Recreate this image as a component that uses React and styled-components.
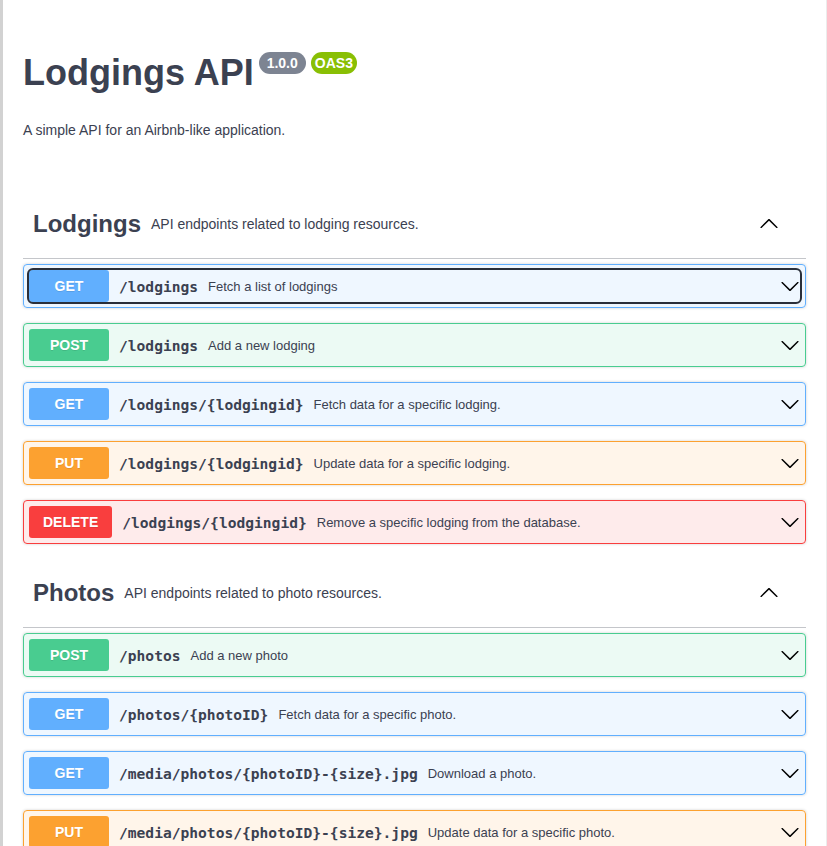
import React from 'react'
import styled, { createGlobalStyle } from 'styled-components'

const GlobalStyle = createGlobalStyle`
  body {
    margin: 0;
    background: #fff;
    font-family: 'Liberation Sans', Arial, sans-serif;
    color: #3b4151;
  }
`

const methodColors = {
  GET: { main: '#61affe', bg: 'rgba(97, 175, 254, 0.1)' },
  POST: { main: '#49cc90', bg: 'rgba(73, 204, 144, 0.1)' },
  PUT: { main: '#fca130', bg: 'rgba(252, 161, 48, 0.1)' },
  DELETE: { main: '#f93e3e', bg: 'rgba(249, 62, 62, 0.1)' },
}

const sections = [
  {
    name: 'Lodgings',
    description: 'API endpoints related to lodging resources.',
    ops: [
      { method: 'GET', path: '/lodgings', summary: 'Fetch a list of lodgings', focused: true },
      { method: 'POST', path: '/lodgings', summary: 'Add a new lodging' },
      { method: 'GET', path: '/lodgings/{lodgingid}', summary: 'Fetch data for a specific lodging.' },
      { method: 'PUT', path: '/lodgings/{lodgingid}', summary: 'Update data for a specific lodging.' },
      { method: 'DELETE', path: '/lodgings/{lodgingid}', summary: 'Remove a specific lodging from the database.' },
    ],
  },
  {
    name: 'Photos',
    description: 'API endpoints related to photo resources.',
    ops: [
      { method: 'POST', path: '/photos', summary: 'Add a new photo' },
      { method: 'GET', path: '/photos/{photoID}', summary: 'Fetch data for a specific photo.' },
      { method: 'GET', path: '/media/photos/{photoID}-{size}.jpg', summary: 'Download a photo.' },
      { method: 'PUT', path: '/media/photos/{photoID}-{size}.jpg', summary: 'Update data for a specific photo.' },
    ],
  },
]

const Page = styled.div`
  min-height: 100vh;
  box-sizing: border-box;
  border-left: 3px solid #d2d2d2;
  border-right: 1px solid #ececec;
  padding: 0 20px;
`
const Info = styled.div`
  padding-top: 52px;
`
const TitleRow = styled.div`
  display: flex;
  align-items: flex-start;
`
const Title = styled.h2`
  margin: 0;
  font-size: 36px;
  font-weight: 700;
  line-height: 41px;
  color: #3b4151;
`
const Badge = styled.span`
  margin-left: ${p => p.$gap}px;
  height: 22px;
  line-height: 22px;
  padding: 0 ${p => p.$pad}px;
  border-radius: 57px;
  background: ${p => p.$bg};
  color: #fff;
  font-size: 14px;
  font-weight: 700;
`
const Description = styled.p`
  margin: 29px 0 0;
  font-size: 14px;
  line-height: 16px;
`
const Sections = styled.div`
  margin-top: 52px;
`
const TagHeader = styled.div`
  display: flex;
  align-items: center;
  height: 68px;
  padding: 0 27px 0 10px;
  border-bottom: 1px solid rgba(59, 65, 81, 0.3);
  margin-bottom: 5px;
`
const TagName = styled.h3`
  margin: 0;
  font-size: 24px;
  font-weight: 700;
`
const TagDesc = styled.span`
  flex: 1;
  margin-left: 10px;
  font-size: 14px;
`
const Op = styled.div`
  margin-bottom: 15px;
  padding: 5px;
  border: 1px solid ${p => p.$color};
  border-radius: 4px;
  background: ${p => p.$bg};
  box-shadow: 0 0 3px rgba(0, 0, 0, 0.19);
`
const Summary = styled.div`
  display: flex;
  align-items: center;
  border-radius: 4px;
  outline: ${p => (p.$focused ? '2px solid #2a2f3a' : 'none')};
  outline-offset: 0;
`
const Method = styled.span`
  box-sizing: border-box;
  min-width: 80px;
  height: 32px;
  padding: 0 14px;
  display: flex;
  align-items: center;
  justify-content: center;
  border-radius: 3px;
  background: ${p => p.$color};
  color: #fff;
  font-size: 14px;
  font-weight: 700;
  text-shadow: 0 1px 0 rgba(0, 0, 0, 0.1);
`
const Path = styled.span`
  padding: 0 10px;
  font-family: 'DejaVu Sans Mono', 'Liberation Mono', monospace;
  font-size: 14.6px;
  font-weight: 700;
  color: #3b4151;
`
const OpSummary = styled.span`
  flex: 1;
  font-size: 13px;
  color: #3b4151;
`
const Arrow = styled.svg`
  width: 20px;
  height: 20px;
  flex-shrink: 0;
  transform: ${p => (p.$up ? 'rotate(180deg)' : 'none')};
`

const Chevron = ({ up }) => (
  <Arrow $up={up} viewBox="0 0 20 20">
    <path
      fill="#000"
      d="M17.418 6.109c.272-.268.709-.268.979 0s.271.701 0 .969l-7.908 7.83c-.27.268-.707.268-.979 0l-7.908-7.83c-.27-.268-.27-.701 0-.969.271-.268.709-.268.979 0L10 13.25l7.418-7.141z"
    />
  </Arrow>
)

const Operation = ({ method, path, summary, focused }) => {
  const c = methodColors[method]
  return (
    <Op $color={c.main} $bg={c.bg}>
      <Summary $focused={focused}>
        <Method $color={c.main}>{method}</Method>
        <Path>{path}</Path>
        <OpSummary>{summary}</OpSummary>
        <Chevron />
      </Summary>
    </Op>
  )
}

export default function App() {
  return (
    <Page>
      <GlobalStyle />
      <Info>
        <TitleRow>
          <Title>Lodgings API</Title>
          <Badge $bg="#7d8492" $pad={8} $gap={5}>1.0.0</Badge>
          <Badge $bg="#89bf04" $pad={4} $gap={5}>OAS3</Badge>
        </TitleRow>
        <Description>A simple API for an Airbnb-like application.</Description>
      </Info>
      <Sections>
        {sections.map(section => (
          <div key={section.name}>
            <TagHeader>
              <TagName>{section.name}</TagName>
              <TagDesc>{section.description}</TagDesc>
              <Chevron up />
            </TagHeader>
            {section.ops.map((op, i) => (
              <Operation key={i} {...op} />
            ))}
          </div>
        ))}
      </Sections>
    </Page>
  )
}
